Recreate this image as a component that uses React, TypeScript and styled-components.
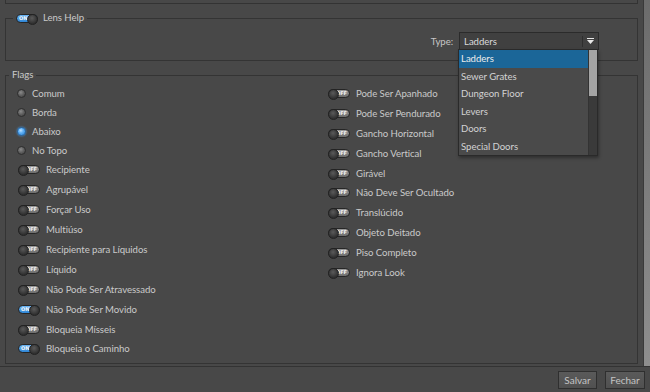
import React from 'react';
import styled, { createGlobalStyle } from 'styled-components';

const GlobalStyle = createGlobalStyle`
  html, body {
    margin: 0;
    padding: 0;
    background: #484848;
  }
  body {
    font-family: Lato, 'Liberation Sans', sans-serif;
    font-size: 9.6px;
    letter-spacing: -0.05px;
    color: #cacaca;
  }
`;

const Window = styled.div`
  width: 650px;
  height: 392px;
  display: flex;
  flex-direction: column;
  background: #484848;
  overflow: hidden;
`;

const Body = styled.div`
  height: 366px;
  display: flex;
`;

const Main = styled.div`
  flex: 1;
  padding: 0 5px;
  display: flex;
  flex-direction: column;
`;

const SideStrip = styled.div`
  width: 6px;
  border-left: 1px solid #3a3a3a;
  background: linear-gradient(#6c6c6c, #8e8e8e);
`;

const TopStub = styled.div`
  height: 3px;
  border: 1px solid #333;
  border-top: none;
`;

const Group = styled.fieldset<{ $top: number; $height: number }>`
  margin: ${(p) => p.$top}px 0 0;
  padding: 0;
  height: ${(p) => p.$height}px;
  box-sizing: border-box;
  border: 1px solid #343434;
  min-width: 0;
`;

const Legend = styled.legend<{ $indent: number }>`
  margin-left: ${(p) => p.$indent}px;
  padding: 0 3px;
  height: 12px;
  line-height: 12px;
  display: flex;
  align-items: center;
  gap: 5px;
  color: #cacaca;
`;

const TypeRow = styled.div`
  display: flex;
  justify-content: flex-end;
  align-items: center;
  gap: 6px;
  padding: 8px 38px 0 0;
`;

const TypeLabel = styled.span`
  color: #c6c6c6;
`;

const Combo = styled.div`
  position: relative;
  width: 140px;
  height: 18px;
  box-sizing: border-box;
  border: 1px solid #2b2b2b;
  background: #404040;
  display: flex;
  align-items: center;
`;

const ComboText = styled.span`
  flex: 1;
  padding-left: 4px;
  color: #dadada;
`;

const ComboArrow = styled.span`
  width: 15px;
  height: 11px;
  border-left: 1px solid #2e2e2e;
  display: flex;
  align-items: center;
  justify-content: center;
`;

const DropList = styled.div`
  position: absolute;
  top: 16px;
  left: -2px;
  width: 140px;
  height: 107px;
  box-sizing: border-box;
  border: 1px solid #2a2a2a;
  background: #4a4a4a;
  display: flex;
  z-index: 10;
  box-shadow: 1px 2px 3px rgba(0, 0, 0, 0.35);
`;

const DropItems = styled.div`
  flex: 1;
  display: flex;
  flex-direction: column;
`;

const DropItem = styled.div<{ $selected?: boolean }>`
  height: 17.5px;
  line-height: 17.5px;
  padding-left: 2px;
  color: ${(p) => (p.$selected ? '#ececec' : '#d2d2d2')};
  background: ${(p) => (p.$selected ? '#1b6698' : 'transparent')};
`;

const ScrollTrack = styled.div`
  width: 8px;
  background: #3a3a3a;
  border-left: 1px solid #333;
`;

const ScrollThumb = styled.div`
  height: 46px;
  background: #a4a4a4;
`;

const FlagsGrid = styled.div`
  display: grid;
  grid-template-columns: 310px 1fr;
  padding: 3px 0 0 10px;
`;

const Column = styled.div`
  display: flex;
  flex-direction: column;
`;

const Row = styled.div<{ $h: number; $toggle?: boolean }>`
  height: ${(p) => p.$h}px;
  display: flex;
  align-items: center;
  gap: 6px;
  padding-left: ${(p) => (p.$toggle ? 2 : 0)}px;
  white-space: nowrap;
`;

const RadioDot = styled.span<{ $on?: boolean }>`
  width: 9px;
  height: 9px;
  border-radius: 50%;
  box-sizing: border-box;
  border: 1px solid ${(p) => (p.$on ? '#2a6fb0' : '#2e2e2e')};
  background: ${(p) =>
    p.$on
      ? 'radial-gradient(circle at 40% 35%, #bfe2ff 0%, #5fb0f5 40%, #2a80d0 100%)'
      : 'radial-gradient(circle at 40% 35%, #8a8a8a 0%, #5e5e5e 50%, #3c3c3c 100%)'};
  box-shadow: ${(p) => (p.$on ? '0 0 2px #4aa0f0' : 'none')};
  margin-left: 1px;
`;

const Track = styled.span<{ $on?: boolean }>`
  position: relative;
  width: 22px;
  height: 9px;
  border-radius: 5px;
  box-sizing: border-box;
  border: 1px solid #262626;
  background: ${(p) =>
    p.$on
      ? 'linear-gradient(#6cb4f2, #2f86d6)'
      : 'linear-gradient(#9a9a9a, #6c6c6c)'};
  display: flex;
  align-items: center;
  justify-content: ${(p) => (p.$on ? 'flex-start' : 'flex-end')};
  flex-shrink: 0;
`;

const TrackText = styled.span`
  font-family: 'DejaVu Sans', sans-serif;
  font-size: 5px;
  font-weight: bold;
  line-height: 5px;
  letter-spacing: 0;
  color: #f4f4f4;
  padding: 0 2px;
`;

const Knob = styled.span<{ $on?: boolean }>`
  position: absolute;
  top: -1px;
  ${(p) => (p.$on ? 'right: -1px;' : 'left: -1px;')}
  width: 9px;
  height: 9px;
  border-radius: 50%;
  background: radial-gradient(circle at 45% 35%, #5a5a5a 0%, #303030 70%);
  border: 1px solid #222;
`;

const Footer = styled.div`
  flex: 1;
  border-top: 1px solid #333;
  display: flex;
  justify-content: flex-end;
  align-items: center;
  gap: 8px;
  padding-right: 5px;
`;

const Button = styled.button<{ $w: number }>`
  width: ${(p) => p.$w}px;
  height: 18px;
  padding: 0;
  border: 1px solid #2f2f2f;
  background: linear-gradient(#5a5a5a, #505050);
  color: #c4c4c4;
  font-family: inherit;
  font-size: 10px;
`;

type ToggleProps = { on?: boolean };

function Toggle({ on }: ToggleProps): React.ReactElement {
  return (
    <Track $on={on}>
      <TrackText>{on ? 'ON' : 'OFF'}</TrackText>
      <Knob $on={on} />
    </Track>
  );
}

const radios = [
  { label: 'Comum' },
  { label: 'Borda' },
  { label: 'Abaixo', on: true },
  { label: 'No Topo' },
];

const leftToggles = [
  { label: 'Recipiente' },
  { label: 'Agrupável' },
  { label: 'Forçar Uso' },
  { label: 'Multiúso' },
  { label: 'Recipiente para Líquidos' },
  { label: 'Líquido' },
  { label: 'Não Pode Ser Atravessado' },
  { label: 'Não Pode Ser Movido', on: true },
  { label: 'Bloqueia Mísseis' },
  { label: 'Bloqueia o Caminho', on: true },
];

const rightToggles = [
  'Pode Ser Apanhado',
  'Pode Ser Pendurado',
  'Gancho Horizontal',
  'Gancho Vertical',
  'Girável',
  'Não Deve Ser Ocultado',
  'Translúcido',
  'Objeto Deitado',
  'Piso Completo',
  'Ignora Look',
];

const types = ['Ladders', 'Sewer Grates', 'Dungeon Floor', 'Levers', 'Doors', 'Special Doors'];

function App(): React.ReactElement {
  return (
    <Window>
      <GlobalStyle />
      <Body>
        <Main>
          <TopStub />
          <Group $top={8} $height={49}>
            <Legend $indent={7}>
              <Toggle on />
              <span>Lens Help</span>
            </Legend>
            <TypeRow>
              <TypeLabel>Type:</TypeLabel>
              <Combo>
                <ComboText>Ladders</ComboText>
                <ComboArrow>
                  <svg width="9" height="7" viewBox="0 0 9 7">
                    <rect x="1" y="0" width="7" height="1" fill="#e8e8e8" />
                    <path d="M1 2 L8 2 L4.5 6 Z" fill="#e8e8e8" />
                  </svg>
                </ComboArrow>
                <DropList>
                  <DropItems>
                    {types.map((t, i) => (
                      <DropItem key={t} $selected={i === 0}>
                        {t}
                      </DropItem>
                    ))}
                  </DropItems>
                  <ScrollTrack>
                    <ScrollThumb />
                  </ScrollTrack>
                </DropList>
              </Combo>
            </TypeRow>
          </Group>
          <Group $top={8} $height={295}>
            <Legend $indent={3}>Flags</Legend>
            <FlagsGrid>
              <Column>
                {radios.map((r) => (
                  <Row key={r.label} $h={19}>
                    <RadioDot $on={r.on} />
                    <span>{r.label}</span>
                  </Row>
                ))}
                {leftToggles.map((t) => (
                  <Row key={t.label} $h={19.9} $toggle>
                    <Toggle on={t.on} />
                    <span>{t.label}</span>
                  </Row>
                ))}
              </Column>
              <Column>
                {rightToggles.map((t) => (
                  <Row key={t} $h={19.8} $toggle>
                    <Toggle />
                    <span>{t}</span>
                  </Row>
                ))}
              </Column>
            </FlagsGrid>
          </Group>
        </Main>
        <SideStrip />
      </Body>
      <Footer>
        <Button $w={39}>Salvar</Button>
        <Button $w={40}>Fechar</Button>
      </Footer>
    </Window>
  );
}

export default App;
